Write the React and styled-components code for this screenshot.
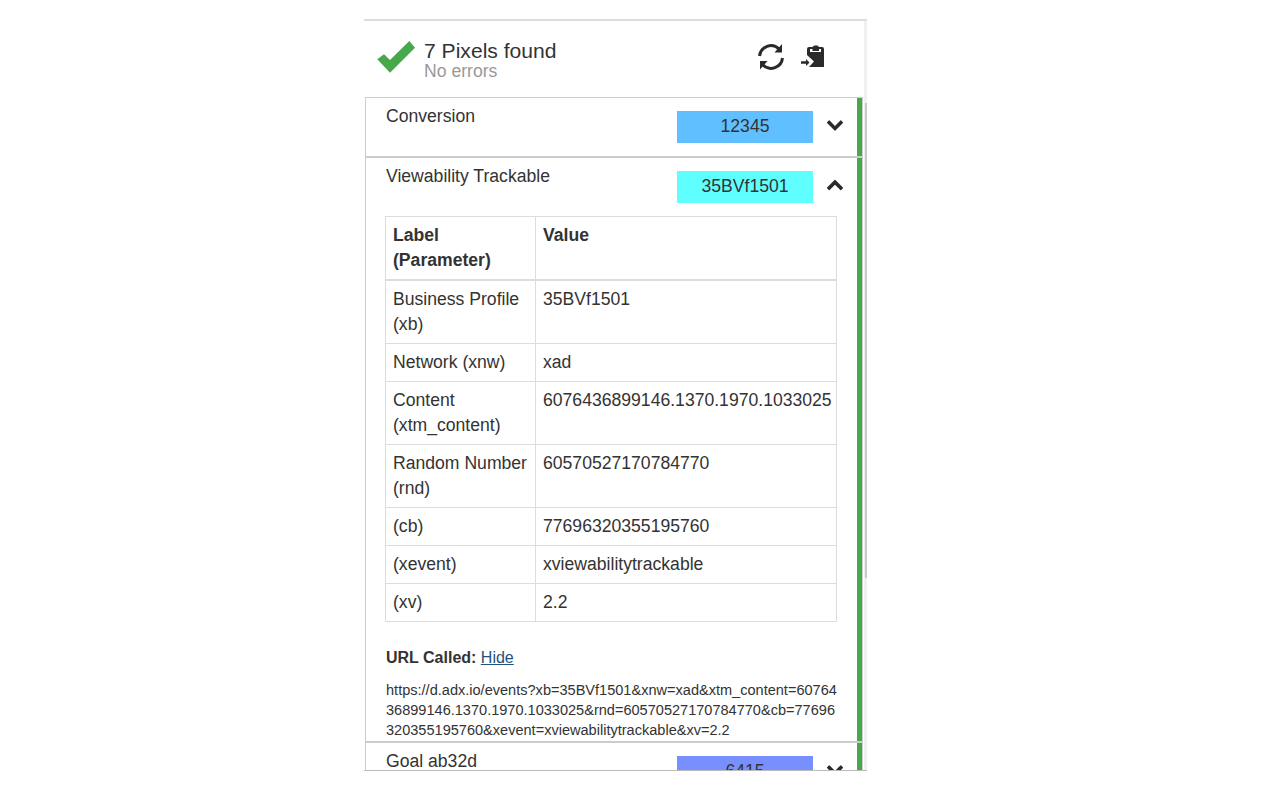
import React from 'react';
import styled, { createGlobalStyle } from 'styled-components';

const Global = createGlobalStyle`
  html, body {
    margin: 0;
    background: #fff;
    font-family: "Liberation Sans", Arial, sans-serif;
    color: #333;
  }
  * {
    box-sizing: border-box;
  }
`;

const Popup = styled.div`
  display: flex;
  width: 503px;
  height: 752px;
  margin: 19px 0 0 364px;
  border-top: 2px solid #ddd;
  border-bottom: 1px solid #bbb;
  box-shadow: 0 2px 1px -1px #aaa;
`;

const Content = styled.div`
  width: 500px;
  overflow: hidden;
`;

const ScrollTrack = styled.div`
  width: 3px;
  background: #f1f1f1;
  display: flex;
  justify-content: flex-end;
`;

const ScrollThumb = styled.div`
  width: 2px;
  height: 475px;
  margin-top: 82px;
  background: #c8c8c8;
`;

const Header = styled.header`
  height: 76px;
  display: flex;
  align-items: center;
  padding: 0 38px 0 12px;
`;

const CheckIcon = styled.svg`
  width: 40px;
  height: 34px;
  fill: #47a84a;
  margin: 0 8px 4px 0;
`;

const Summary = styled.div`
  flex: 1;
  padding-top: 1px;
`;

const Title = styled.div`
  font-size: 21.1px;
  line-height: 22px;
  color: #333;
`;

const Subtitle = styled.div`
  font-size: 17.6px;
  line-height: 18px;
  color: #999;
`;

const Tools = styled.div`
  display: flex;
  align-items: center;
  gap: 14px;
  margin-bottom: 5px;
`;

const ToolIcon = styled.svg`
  width: ${(p) => p.$size}px;
  height: ${(p) => p.$size}px;
  fill: #2a2a2a;
  display: block;
`;

const Arc = styled.path`
  fill: none;
  stroke: #2a2a2a;
  stroke-width: 3;
`;

const Item = styled.section`
  margin-left: 1px;
  width: 498px;
  border-top: ${(p) => (p.$first ? 1 : 2)}px solid #ccc;
  border-left: 1px solid #ccc;
  border-right: 1px solid #ccc;
`;

const ItemInner = styled.div`
  border-right: 5px solid #47a84a;
  padding: 13px 0 0 20px;
  min-height: 58px;
`;

const ItemHead = styled.div`
  display: flex;
  align-items: flex-start;
  height: 32px;
`;

const ItemName = styled.div`
  flex: 1;
  font-size: 17.6px;
  line-height: 22px;
  margin-top: -6px;
  color: #333;
`;

const Badge = styled.div`
  width: 136px;
  height: 32px;
  line-height: 30px;
  text-align: center;
  font-size: 17.6px;
  color: #333;
  background: ${(p) => p.$color};
`;

const Chevron = styled.svg`
  flex: none;
  width: 18px;
  height: 18px;
  fill: #2a2a2a;
  margin: 4px 13px 0 13px;
`;

const Body = styled.div`
  padding-top: 13px;
`;

const Table = styled.table`
  width: 452px;
  margin-left: -1px;
  table-layout: fixed;
  border-collapse: collapse;
  font-size: 17.6px;
  line-height: 25px;
  color: #333;
  td, th {
    border: 1px solid #ddd;
    padding: 6px 7px;
    vertical-align: top;
    text-align: left;
  }
  th {
    border-bottom-width: 2px;
  }
  td:first-child, th:first-child {
    width: 150px;
  }
`;

const UrlLabel = styled.div`
  margin-top: 24px;
  font-size: 16px;
  line-height: 23px;
  font-weight: bold;
`;

const Link = styled.a`
  font-weight: normal;
  color: #23527c;
  text-decoration: underline;
`;

const UrlText = styled.div`
  margin-top: 11px;
  width: 452px;
  font-size: 14.56px;
  line-height: 20.2px;
  word-break: break-all;
`;

const rows = [
  ['Business Profile (xb)', '35BVf1501'],
  ['Network (xnw)', 'xad'],
  ['Content (xtm_content)', '6076436899146.1370.1970.1033025'],
  ['Random Number (rnd)', '60570527170784770'],
  ['(cb)', '77696320355195760'],
  ['(xevent)', 'xviewabilitytrackable'],
  ['(xv)', '2.2'],
];

const chevronDown =
  'M1683 808l-742 741q-19 19-45 19t-45-19l-742-741q-19-19-19-45.5t19-45.5l166-165q19-19 45-19t45 19l531 531 531-531q19-19 45-19t45 19l166 165q19 19 19 45.5t-19 45.5z';
const chevronUp =
  'M1683 1331l-166 165q-19 19-45 19t-45-19l-531-531-531 531q-19 19-45 19t-45-19l-166-165q-19-19-19-45.5t19-45.5l742-741q19-19 45-19t45 19l742 741q19 19 19 45.5t-19 45.5z';

const Toggle = ({ open }) => (
  <Chevron viewBox="0 0 1792 1792">
    <path d={open ? chevronUp : chevronDown} />
  </Chevron>
);

export default function App() {
  return (
    <>
      <Global />
      <Popup>
        <Content>
          <Header>
            <CheckIcon viewBox="0 0 40 34">
              <polygon points="1.3,19.3 8,14.3 14,20 33.3,1 39,7.7 14,32.7" />
            </CheckIcon>
            <Summary>
              <Title>7 Pixels found</Title>
              <Subtitle>No errors</Subtitle>
            </Summary>
            <Tools>
              <ToolIcon $size={30} viewBox="0 0 30 30">
                <Arc d="M3.5 14A11.5 11.5 0 0 1 23 7" />
                <polygon points="26,2 26,10.500 18.500,10.500" />
                <Arc d="M26.500 16A11.500 11.500 0 0 1 7 23" />
                <polygon points="4,27.500 4,19 11.500,19" />
              </ToolIcon>
              <ToolIcon $size={26} viewBox="0 0 26 26">
                <path
                  fillRule="evenodd"
                  d="M9 3H22a2 2 0 0 1 2 2V23H9L14 17.500 7 11V5a2 2 0 0 1 2-2zM10 5V8H21V5z"
                />
                <path d="M12.500 7V3.500a3 2.500 0 0 1 2-2h2.500a2 2.500 0 0 1 2 2V7z" />
                <path d="M1 17.300h5V15l3.500 3.500L6 22v-2.300H1z" />
              </ToolIcon>
            </Tools>
          </Header>

          <Item $first>
            <ItemInner>
              <ItemHead>
                <ItemName>Conversion</ItemName>
                <Badge $color="#5fbfff">12345</Badge>
                <Toggle />
              </ItemHead>
            </ItemInner>
          </Item>

          <Item>
            <ItemInner>
              <ItemHead>
                <ItemName>Viewability Trackable</ItemName>
                <Badge $color="#5fffff">35BVf1501</Badge>
                <Toggle open />
              </ItemHead>
              <Body>
                <Table>
                  <thead>
                    <tr>
                      <th>Label (Parameter)</th>
                      <th>Value</th>
                    </tr>
                  </thead>
                  <tbody>
                    {rows.map(([label, value]) => (
                      <tr key={label}>
                        <td>{label}</td>
                        <td>{value}</td>
                      </tr>
                    ))}
                  </tbody>
                </Table>
                <UrlLabel>
                  URL Called: <Link href="#">Hide</Link>
                </UrlLabel>
                <UrlText>
                  https://d.adx.io/events?xb=35BVf1501&amp;xnw=xad&amp;xtm_content=6076436899146.1370.1970.1033025&amp;rnd=60570527170784770&amp;cb=77696320355195760&amp;xevent=xviewabilitytrackable&amp;xv=2.2
                </UrlText>
              </Body>
            </ItemInner>
          </Item>

          <Item>
            <ItemInner>
              <ItemHead>
                <ItemName>Goal ab32d</ItemName>
                <Badge $color="#788fff">6415</Badge>
                <Toggle />
              </ItemHead>
            </ItemInner>
          </Item>
        </Content>
        <ScrollTrack>
          <ScrollThumb />
        </ScrollTrack>
      </Popup>
    </>
  );
}
